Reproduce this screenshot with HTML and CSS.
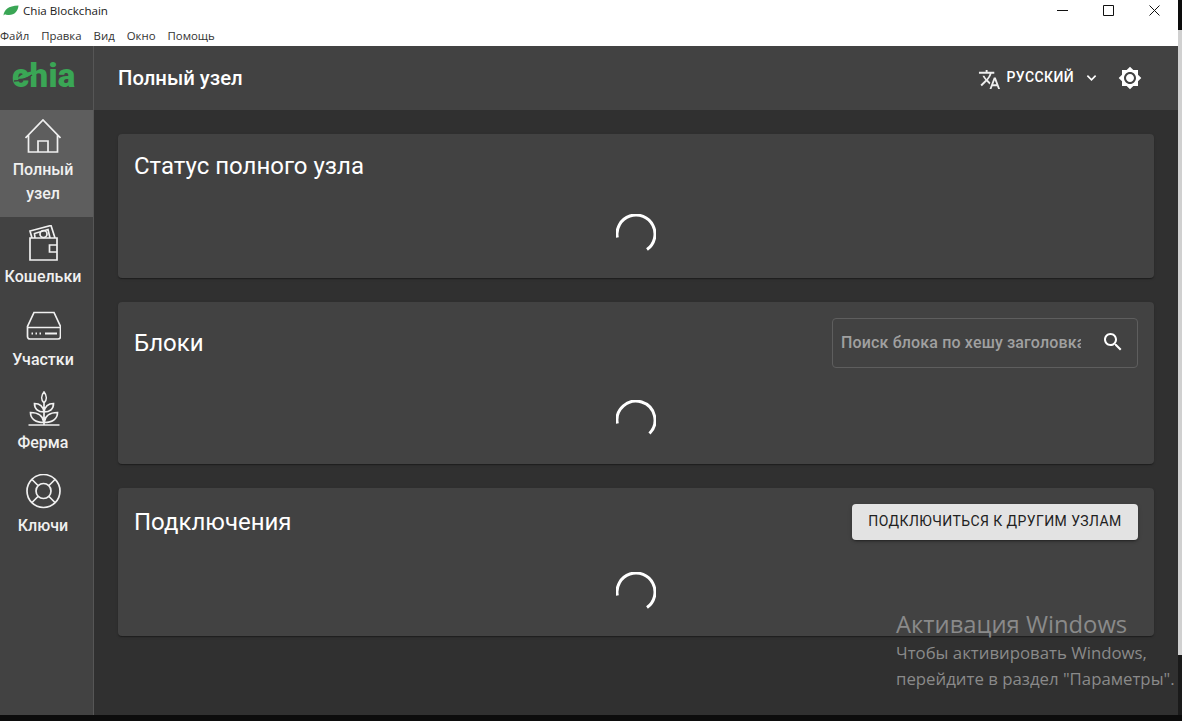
FILE: index.html
```html
<!DOCTYPE html>
<html lang="ru">
<head>
<meta charset="utf-8">
<title>Chia Blockchain</title>
<link rel="stylesheet" href="styles.css">
</head>
<body>
<div class="screen">
  <div class="window">
    <div class="titlebar">
      <svg class="title-leaf" viewBox="0 0 16 11"><path d="M0.5 10.5C1 5 5 .8 15.5 .5C15 6 11.5 10.5 5 10C3.5 9.8 2.5 9.5 2 9.2Z"/></svg>
      <span class="title-text">Chia Blockchain</span>
      <div class="win-controls">
        <svg class="win-btn" viewBox="0 0 11 11"><path d="M0 5.5H11"/></svg>
        <svg class="win-btn" viewBox="0 0 11 11"><path d="M.5 .5H10.5V10.5H.5Z"/></svg>
        <svg class="win-btn" viewBox="0 0 11 11"><path d="M.5 .5L10.5 10.5M10.5 .5L.5 10.5"/></svg>
      </div>
    </div>
    <div class="menubar">
      <span>Файл</span><span>Правка</span><span>Вид</span><span>Окно</span><span>Помощь</span>
    </div>
    <div class="app">
      <aside class="sidebar">
        <div class="logo">
          <span class="logo-text">chia</span>
          <svg class="logo-leaf" viewBox="0 0 24 14"><path class="leaf-fill" d="M5 9C9 4 15 2 22 1C20 6 14 9 5 9Z"/><path class="leaf-cut" d="M2 11C8 11 14 9 20 5"/></svg>
        </div>
        <nav class="nav">
          <a class="nav-item active">
            <svg class="nav-icon" viewBox="-.5 0 36 36"><path d="M0 20L17.5 2L35 20M3 17V34H32V17M12.5 34V23H22.5V34"/></svg>
            <span>Полный узел</span>
          </a>
          <a class="nav-item">
            <svg class="nav-icon" viewBox="0 0 36 36"><path d="M5 13H32V35H5ZM32 20H24.500V27H32M7 13L5 6L26 .5L30 13M10 13L9.500 8.500L23 4.500L25 13"/><circle cx="18.500" cy="9" r="3.500"/></svg>
            <span>Кошельки</span>
          </a>
          <a class="nav-item">
            <svg class="nav-icon" viewBox="-1 0 36 36"><path d="M8 4.500H28L34.500 18.500V28.500C34.500 30 33.500 31 32 31H4C2.500 31 1.500 30 1.500 28.500V18.500ZM1.500 19.500H34.500"/><path class="fine" d="M5.500 25.500H7M9.500 25.500H11M13.500 25.500H15M19 25.500H31"/></svg>
            <span>Участки</span>
          </a>
          <a class="nav-item">
            <svg class="nav-icon" viewBox="-1 0 36 36"><path d="M2.500 34H33.500M18 34V12M18 1C15 4.500 15 9 18 12C21 9 21 4.500 18 1ZM18 21C17 15 13 12.500 8.500 12.500C8.500 18 12 21 18 21ZM18 21C19 15 23 12.500 27.500 12.500C27.500 18 24 21 18 21ZM18 31.500C17 25 12 21.500 4.500 21.500C4.500 28 10 31.500 18 31.500ZM18 31.500C19 25 24 21.500 31.500 21.500C31.500 28 26 31.500 18 31.500Z"/></svg>
            <span>Ферма</span>
          </a>
          <a class="nav-item">
            <svg class="nav-icon" viewBox="-.5 0 36 36"><circle cx="18" cy="17" r="16.500"/><circle cx="18" cy="17" r="7.500"/><path d="M6.500 5.500L12.500 11.500M29.500 5.500L23.500 11.500M6.500 28.500L12.500 22.500M29.500 28.500L23.500 22.500"/></svg>
            <span>Ключи</span>
          </a>
        </nav>
      </aside>
      <div class="main">
        <header class="header">
          <h1 class="page-title">Полный узел</h1>
          <div class="header-actions">
            <div class="lang">
              <svg class="lang-icon" viewBox="0 0 24 24"><path d="M12.870 15.070l-2.540-2.510.030-.030c1.740-1.940 2.980-4.170 3.710-6.530H17V4h-7V2H8v2H1v1.990h11.170C11.500 7.920 10.440 9.750 9 11.350 8.070 10.320 7.300 9.190 6.690 8h-2c.73 1.630 1.730 3.170 2.980 4.560l-5.090 5.020L4 19l5-5 3.110 3.110.760-2.040zM18.500 10h-2L12 22h2l1.120-3h4.750L21 22h2l-4.500-12zm-2.620 7l1.620-4.330L19.120 17h-3.240z"/></svg>
              <span class="lang-label">Русский</span>
              <svg class="chev" viewBox="0 0 12 8"><path d="M1.500 1.500L6 6L10.500 1.500"/></svg>
            </div>
            <svg class="theme-icon" viewBox="0 0 24 24"><path d="M20 8.690V4h-4.690L12 .690 8.690 4H4v4.690L.690 12 4 15.310V20h4.690L12 23.310 15.310 20H20v-4.690L23.310 12 20 8.690zM12 18c-3.310 0-6-2.690-6-6s2.690-6 6-6 6 2.690 6 6-2.690 6-6 6zm0-10c-2.210 0-4 1.790-4 4s1.790 4 4 4 4-1.790 4-4-1.790-4-4-4z"/></svg>
          </div>
        </header>
        <main class="content">
          <section class="card">
            <div class="card-head"><h2 class="card-title">Статус полного узла</h2></div>
            <svg class="spinner" viewBox="0 0 40 40"><path d="M1.300 23.500A19 19 0 1 1 31 35.500"/></svg>
          </section>
          <section class="card">
            <div class="card-head">
              <h2 class="card-title">Блоки</h2>
              <div class="search">
                <span class="search-text">Поиск блока по хешу заголовка</span>
                <svg class="search-icon" viewBox="0 0 24 24"><path d="M15.500 14h-.790l-.280-.270C15.410 12.590 16 11.110 16 9.500 16 5.910 13.090 3 9.500 3S3 5.910 3 9.500 5.910 16 9.500 16c1.610 0 3.090-.590 4.230-1.570l.270.280v.790l5 4.990L20.490 19l-4.990-5zm-6 0C7.010 14 5 11.990 5 9.500S7.010 5 9.500 5 14 7.010 14 9.500 11.990 14 9.500 14z"/></svg>
              </div>
            </div>
            <svg class="spinner" viewBox="0 0 40 40"><path d="M1.300 23.500A19 19 0 1 1 33.500 33.500"/></svg>
          </section>
          <section class="card">
            <div class="card-head">
              <h2 class="card-title">Подключения</h2>
              <button class="connect-btn">Подключиться к другим узлам</button>
            </div>
            <svg class="spinner" viewBox="0 0 40 40"><path d="M1.300 23.500A19 19 0 1 1 31 35.500"/></svg>
          </section>
        </main>
      </div>
    </div>
  </div>
  <div class="edge"></div>
</div>
<div class="activation">
  <div class="activation-title">Активация Windows</div>
  <div class="activation-sub">Чтобы активировать Windows,<br>перейдите в раздел "Параметры".</div>
</div>
</body>
</html>
```

FILE: styles.css
```css
* { box-sizing: border-box; }
html, body { margin: 0; height: 100%; overflow: hidden; background: #0c0c0c; }
body { font-family: Roboto, "Liberation Sans", sans-serif; }

.screen { display: flex; height: 715px; }
.window { width: 1178px; display: flex; flex-direction: column; background: #fff; }
.edge { flex: 1; background: linear-gradient(#0c0c0c 0, #0c0c0c 30px, #d0d0d0 30px, #d0d0d0 655px, #1a1a1a 655px); }

.titlebar { height: 20px; display: flex; align-items: center; padding-left: 3px; }
.title-leaf { width: 16px; height: 11px; margin-right: 4px; }
.title-leaf path { fill: #3aa655; }
.title-text { font-family: "Open Sans", "Noto Sans", sans-serif; font-size: 11.600px; color: #222; }
.win-controls { margin-left: auto; display: flex; gap: 35px; padding-right: 18px; }
.win-btn { width: 11px; height: 11px; display: block; }
.win-btn path { fill: none; stroke: #111; stroke-width: 1; }

.menubar { height: 26px; display: flex; align-items: center; gap: 12px; padding-top: 5px; font-family: "Open Sans", "Noto Sans", sans-serif; font-size: 11.400px; color: #333; }

.app { flex: 1; display: flex; min-height: 0; background: #303030; }
.sidebar { width: 94px; background: #424242; border-right: 1px solid #565656; display: flex; flex-direction: column; }
.logo { position: relative; height: 64px; display: flex; align-items: center; padding: 0 0 6px 12px; }
.logo-text { font-family: Roboto, Lato, sans-serif; font-weight: 900; font-size: 33px; letter-spacing: .3px; color: #3aa655; line-height: 1; }
.logo-leaf { position: absolute; left: 12px; top: 24px; width: 24px; height: 14px; }
.leaf-fill { fill: #3aa655; }
.leaf-cut { fill: none; stroke: #424242; stroke-width: 1.300; }

.nav { display: flex; flex-direction: column; }
.nav-item { display: flex; flex-direction: column; align-items: center; gap: 4px; padding: 8px 7px 11px 0; color: #f0f0f0; font-size: 16px; font-weight: 500; line-height: 24px; text-align: center; }
.nav-item.active { background: #5e5e5e; padding-left: 8px; padding-right: 15px; }
.nav-icon { width: 36px; height: 36px; display: block; }
.nav-icon path, .nav-icon circle { fill: none; stroke: #f0f0f0; stroke-width: 1.700; }
.nav-icon .fine { stroke-width: 1.800; }

.main { flex: 1; display: flex; flex-direction: column; min-width: 0; }
.header { height: 64px; background: #424242; display: flex; align-items: center; justify-content: space-between; padding: 0 36px 0 24px; }
.page-title { margin: 0; font-size: 20.300px; font-weight: 500; color: #fff; }
.header-actions { display: flex; align-items: center; }
.lang { display: flex; align-items: center; }
.lang-icon { width: 23px; height: 23px; fill: #eee; margin-right: 6px; margin-top: 2px; }
.lang-label { font-size: 14px; font-weight: 500; letter-spacing: .4px; text-transform: uppercase; color: #fff; margin-top: -2px; }
.chev { width: 11px; height: 8px; margin-left: 12px; }
.chev path { fill: none; stroke: #fff; stroke-width: 1.800; }
.theme-icon { width: 24px; height: 24px; fill: #fff; margin-left: 21px; }

.content { flex: 1; padding: 24px; display: flex; flex-direction: column; gap: 24px; }
.card { background: #424242; border-radius: 4px; padding: 16px 16px 24px; box-shadow: 0 2px 1px -1px rgba(0,0,0,.2), 0 1px 1px 0 rgba(0,0,0,.14), 0 1px 3px 0 rgba(0,0,0,.12); display: flex; flex-direction: column; align-items: center; gap: 32px; }
.card-head { width: 100%; display: flex; align-items: center; justify-content: space-between; }
.card-title { margin: 0; font-size: 24px; font-weight: 400; line-height: 32px; color: #fff; }
.spinner { width: 40px; height: 40px; display: block; }
.spinner path { fill: none; stroke: #fff; stroke-width: 3; }

.search { width: 306px; height: 50px; border: 1px solid #5e5e5e; border-radius: 4px; display: flex; align-items: center; padding: 0 8px 2px; }
.search-text { width: 240px; overflow: hidden; white-space: nowrap; font-size: 16px; font-weight: 500; letter-spacing: .15px; color: #a0a0a0; }
.search-icon { width: 24px; height: 24px; fill: #fff; margin-left: auto; margin-right: 4px; }

.connect-btn { height: 36px; width: 286px; border: 0; border-radius: 4px; padding: 0 0 2px; background: #e3e3e3; color: #212121; font-family: inherit; font-size: 14px; font-weight: 400; letter-spacing: .42px; text-transform: uppercase; box-shadow: 0 3px 1px -2px rgba(0,0,0,.2), 0 2px 2px 0 rgba(0,0,0,.14), 0 1px 5px 0 rgba(0,0,0,.12); }

.activation { position: absolute; left: 896px; top: 609px; font-family: "Open Sans", "Noto Sans", sans-serif; color: #8a8a8a; }
.activation-title { font-size: 23.800px; line-height: 31px; }
.activation-sub { font-size: 16.800px; line-height: 26px; }
```
